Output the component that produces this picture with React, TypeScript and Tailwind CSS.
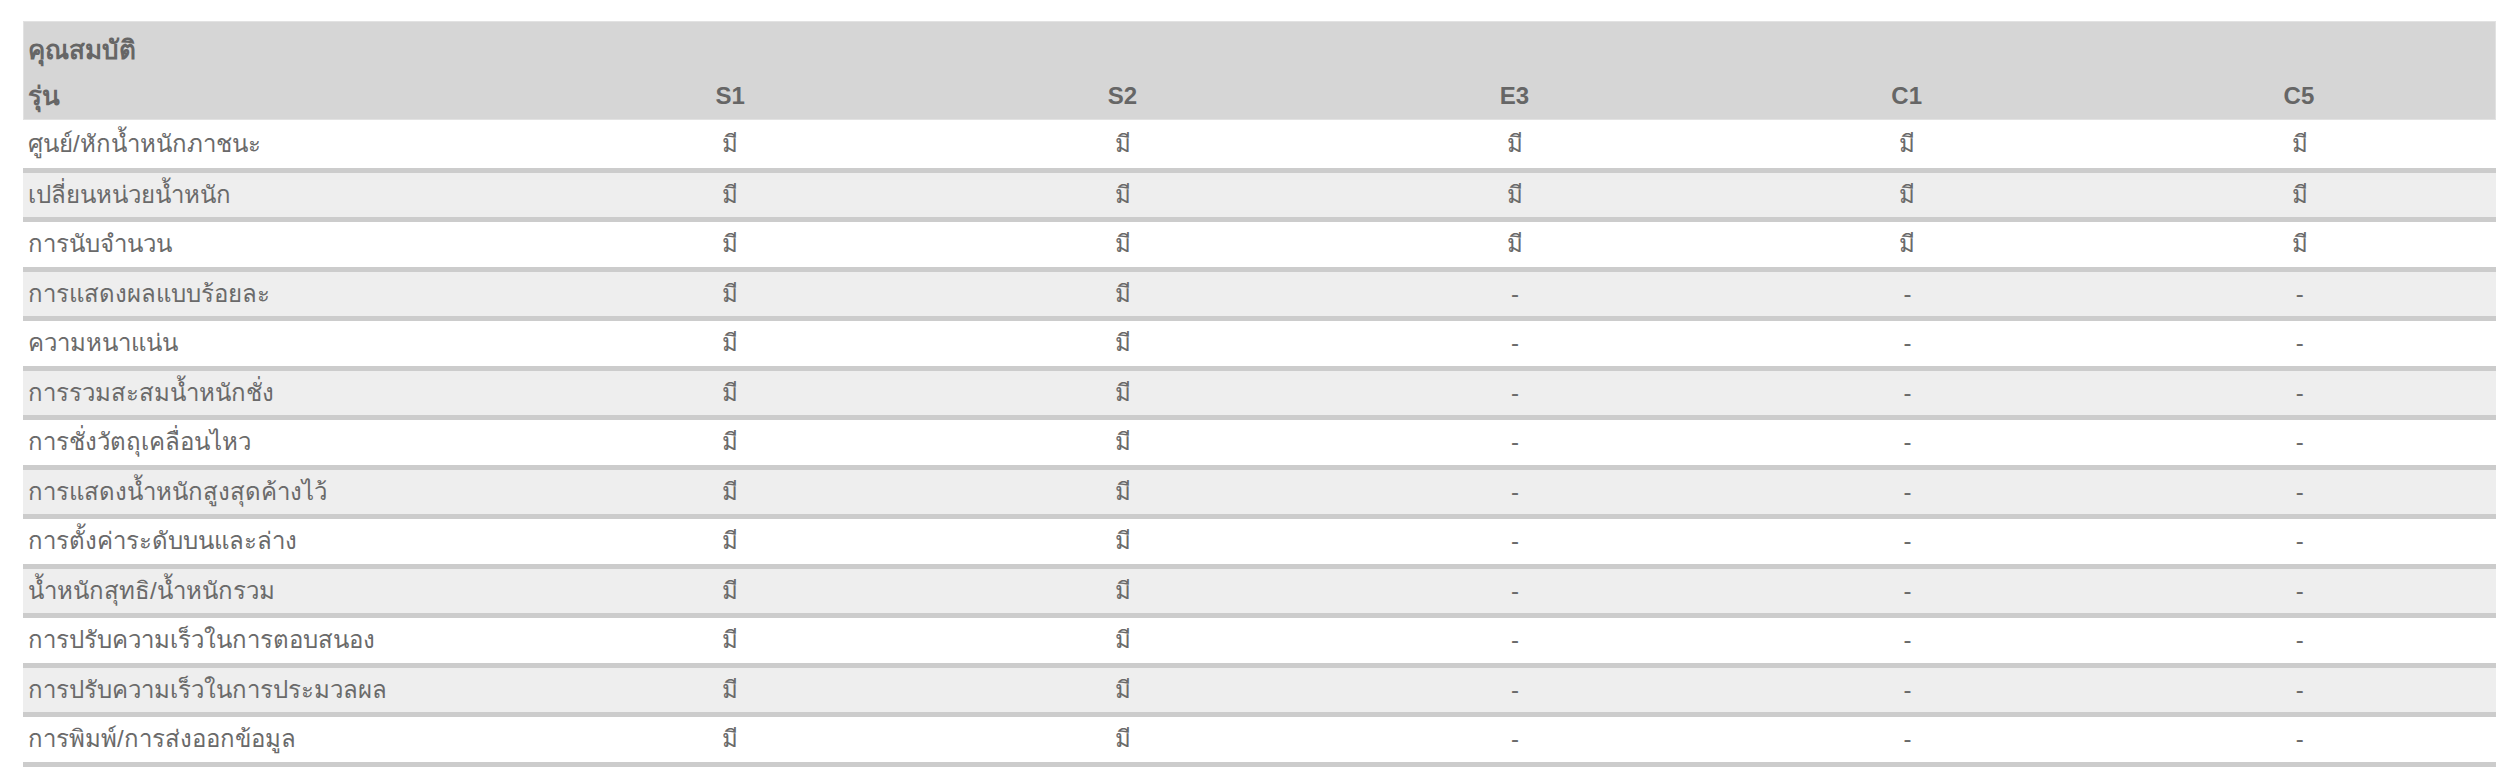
import React from "react";

const features: { name: string; vals: boolean[] }[] = [
  { name: "ศูนย์/หักน้ำหนักภาชนะ", vals: [true, true, true, true, true] },
  { name: "เปลี่ยนหน่วยน้ำหนัก", vals: [true, true, true, true, true] },
  { name: "การนับจำนวน", vals: [true, true, true, true, true] },
  { name: "การแสดงผลแบบร้อยละ", vals: [true, true, false, false, false] },
  { name: "ความหนาแน่น", vals: [true, true, false, false, false] },
  { name: "การรวมสะสมน้ำหนักชั่ง", vals: [true, true, false, false, false] },
  { name: "การชั่งวัตถุเคลื่อนไหว", vals: [true, true, false, false, false] },
  { name: "การแสดงน้ำหนักสูงสุดค้างไว้", vals: [true, true, false, false, false] },
  { name: "การตั้งค่าระดับบนและล่าง", vals: [true, true, false, false, false] },
  { name: "น้ำหนักสุทธิ/น้ำหนักรวม", vals: [true, true, false, false, false] },
  { name: "การปรับความเร็วในการตอบสนอง", vals: [true, true, false, false, false] },
  { name: "การปรับความเร็วในการประมวลผล", vals: [true, true, false, false, false] },
  { name: "การพิมพ์/การส่งออกข้อมูล", vals: [true, true, false, false, false] },
];

const models = ["S1", "S2", "E3", "C1", "C5"];

export default function App() {
  return (
    <div
      className="bg-white w-[2511px] h-[767px] overflow-hidden pt-[21px] pl-[23px]"
      style={{ fontFamily: '"Liberation Sans", "Noto Sans", "DejaVu Sans", sans-serif' }}
    >
      <div className="w-[2473px] text-[#666666]">
        <div className="flex h-[99px] bg-[#d6d6d6] border border-[#e2e2e2] pt-[5px] text-[24px] font-bold leading-[46px]">
          <div className="w-[510px] shrink-0 pl-[4px] flex flex-col text-[26px]">
            <div>คุณสมบัติ</div>
            <div>รุ่น</div>
          </div>
          {models.map((m) => (
            <div key={m} className="flex-1 flex items-end justify-center">
              <div>{m}</div>
            </div>
          ))}
        </div>
        {features.map((f, i) => (
          <div
            key={f.name}
            className={`flex items-center text-[24px] text-[#6a6a6a] border-b-[5.5px] border-[#cccccc] ${
              i % 2 === 1 ? "bg-[#eeeeee]" : "bg-white"
            } ${i === 0 ? "h-[52.5px]" : "h-[49.5px]"}`}
          >
            <div className="w-[511px] shrink-0 pl-[5px]">{f.name}</div>
            {f.vals.map((v, j) => (
              <div key={j} className="flex-1 text-center">
                {v ? "มี" : "-"}
              </div>
            ))}
          </div>
        ))}
      </div>
    </div>
  );
}
